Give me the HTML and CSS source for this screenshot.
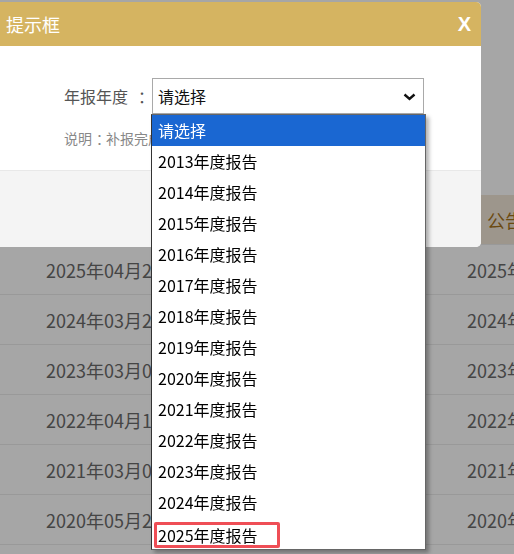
FILE: index.html
```html
<!DOCTYPE html>
<html lang="zh-CN">
<head>
    <meta charset="UTF-8">
    <meta name="viewport" content="width=device-width, initial-scale=1.0">
    <title>年报补报</title>
    <link rel="stylesheet" href="styles.css">
</head>
<body>
    <div class="page">
        <div class="page-head">企业年度报告公示</div>
        <table class="report-table">
            <thead>
                <tr>
                    <th>报送年度</th>
                    <th>公告日期</th>
                </tr>
            </thead>
            <tbody>
                <tr><td>2025年04月28日</td><td>2025年04月28日</td></tr>
                <tr><td>2024年03月26日</td><td>2024年03月26日</td></tr>
                <tr><td>2023年03月08日</td><td>2023年03月08日</td></tr>
                <tr><td>2022年04月15日</td><td>2022年04月15日</td></tr>
                <tr><td>2021年03月03日</td><td>2021年03月03日</td></tr>
                <tr><td>2020年05月22日</td><td>2020年05月22日</td></tr>
            </tbody>
        </table>
    </div>

    <!-- 遮罩层 -->
    <div class="mask"></div>

    <!-- 提示框 -->
    <div class="dialog">
        <div class="dialog-title">
            <span>提示框</span>
            <span class="dialog-close">X</span>
        </div>
        <div class="dialog-body">
            <div class="form-row">
                <label class="form-label">年报年度<span class="colon">：</span></label>
                <div class="select-box">
                    <span>请选择</span>
                    <svg class="chevron" width="13" height="8" viewBox="0 0 13 8">
                        <path d="M1.5 1.5 L6.5 6 L11.5 1.5" fill="none" stroke="#111" stroke-width="2.4"/>
                    </svg>
                    <ul class="select-list">
                        <li class="active">请选择</li>
                        <li>2013年度报告</li>
                        <li>2014年度报告</li>
                        <li>2015年度报告</li>
                        <li>2016年度报告</li>
                        <li>2017年度报告</li>
                        <li>2018年度报告</li>
                        <li>2019年度报告</li>
                        <li>2020年度报告</li>
                        <li>2021年度报告</li>
                        <li>2022年度报告</li>
                        <li>2023年度报告</li>
                        <li>2024年度报告</li>
                        <li><span class="mark">2025年度报告</span></li>
                    </ul>
                </div>
            </div>
            <p class="form-note">说明<span class="colon-sm">：</span>补报完成后需重新提交公示</p>
        </div>
        <div class="dialog-foot"></div>
    </div>
</body>
</html>
```

FILE: styles.css
```css
:root {
    --gold: #d5b461;
    --blue: #1a67d2;
    --text: #555;
}

html, body {
    margin: 0;
    padding: 0;
    overflow: hidden;
}

body {
    font-family: "Noto Sans CJK SC", "Noto Sans", sans-serif;
    background: #fff;
    color: #333;
}

.page {
    width: 514px;
    height: 554px;
    overflow: hidden;
}

.page-head {
    height: 221px;
    margin-top: -26px;
    font-size: 20px;
    line-height: 30px;
    color: #7a4f10;
    padding-left: 10px;
}

.report-table {
    border-collapse: collapse;
    width: 660px;
    table-layout: fixed;
    font-size: 18px;
    color: #6b6b6b;
}

.report-table th,
.report-table td {
    height: 49px;
    padding: 0;
    text-align: left;
    border-bottom: 1px solid #ececec;
    line-height: 22px;
    white-space: nowrap;
}

.report-table th {
    background: #f2e6d8;
    color: #a57219;
    font-weight: normal;
}

.report-table th:first-child,
.report-table td:first-child {
    width: 421px;
    padding-left: 46px;
    box-sizing: border-box;
}

.report-table th:last-child {
    padding-left: 66px;
}

.report-table td:last-child {
    padding-left: 46px;
}

.mask {
    position: fixed;
    inset: 0;
    background: rgba(0, 0, 0, 0.35);
}

.dialog {
    position: fixed;
    top: 2px;
    left: 0;
    width: 481px;
    background: #fff;
    border-radius: 0 5px 5px 0;
}

.dialog-title {
    height: 44px;
    background: var(--gold);
    border-radius: 0 5px 0 0;
    color: #fff;
    font-size: 18px;
    line-height: 44px;
    padding: 0 10px 0 6px;
    display: flex;
    justify-content: space-between;
}

.dialog-close {
    font-family: "Liberation Sans", Arial, sans-serif;
    font-weight: bold;
    font-size: 20px;
}

.dialog-body {
    height: 124px;
    box-sizing: border-box;
    padding: 32px 0 0 64px;
}

.form-row {
    display: flex;
    align-items: center;
}

.form-label {
    width: 84px;
    margin-right: 4px;
    font-size: 16px;
    color: var(--text);
    line-height: 36px;
    white-space: nowrap;
}

.colon {
    display: inline-block;
    width: 20px;
    padding-left: 10px;
    box-sizing: border-box;
}

.colon-sm {
    display: inline-block;
    width: 14px;
    padding-left: 4px;
    box-sizing: border-box;
}

.select-box {
    position: relative;
    width: 272px;
    height: 36px;
    box-sizing: border-box;
    border: 1px solid #a9a9a9;
    font-size: 16px;
    line-height: 34px;
    color: #111;
    padding-left: 5px;
}

.chevron {
    position: absolute;
    right: 7px;
    top: 14px;
}

.select-list {
    position: absolute;
    top: 35px;
    left: -2px;
    width: 275px;
    margin: 0;
    padding: 0;
    list-style: none;
    background: #fff;
    border: 1px solid #666;
    border-left-color: #333;
    box-sizing: border-box;
    box-shadow: 3px 3px 4px rgba(0, 0, 0, 0.3);
    z-index: 2;
}

.select-list li {
    height: 31px;
    line-height: 31px;
    padding-left: 6px;
    color: #000;
    font-size: 16px;
}

.select-list li.active {
    background: var(--blue);
    color: #fff;
}

.mark {
    display: inline-block;
    height: 20px;
    line-height: 20px;
    margin: 4px 0 0 -4px;
    padding: 0 19px 0 1px;
    border: 3px solid #ef4e56;
    border-radius: 2px;
}

.form-note {
    margin: 14px 0 0;
    font-size: 14px;
    line-height: 20px;
    color: #888;
    white-space: nowrap;
}

.dialog-foot {
    height: 76px;
    background: #f4f4f4;
    border-top: 1px solid #e8e8e8;
    border-radius: 0 0 5px 0;
}
```
